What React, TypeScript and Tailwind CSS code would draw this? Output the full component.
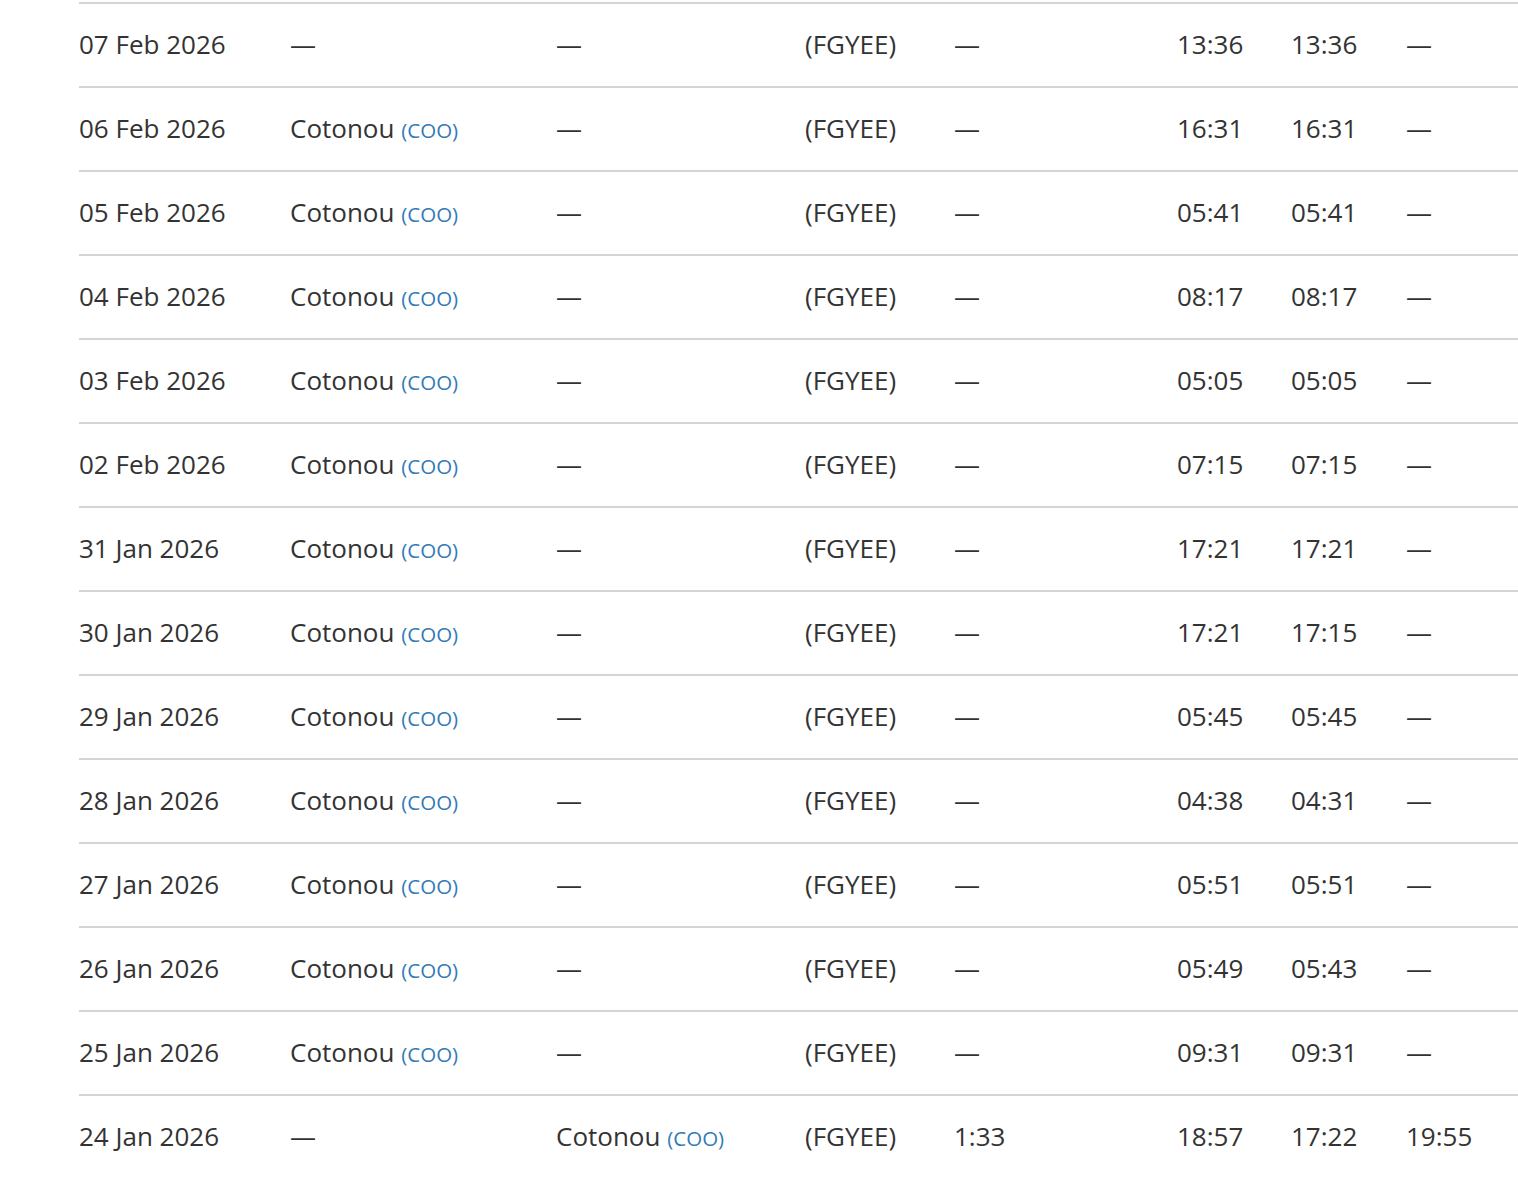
const rows: [string, string | null, string | null, string, string, string, string, string][] = [
  ["07 Feb 2026", null, null, "(FGYEE)", "—", "13:36", "13:36", "—"],
  ["06 Feb 2026", "Cotonou", null, "(FGYEE)", "—", "16:31", "16:31", "—"],
  ["05 Feb 2026", "Cotonou", null, "(FGYEE)", "—", "05:41", "05:41", "—"],
  ["04 Feb 2026", "Cotonou", null, "(FGYEE)", "—", "08:17", "08:17", "—"],
  ["03 Feb 2026", "Cotonou", null, "(FGYEE)", "—", "05:05", "05:05", "—"],
  ["02 Feb 2026", "Cotonou", null, "(FGYEE)", "—", "07:15", "07:15", "—"],
  ["31 Jan 2026", "Cotonou", null, "(FGYEE)", "—", "17:21", "17:21", "—"],
  ["30 Jan 2026", "Cotonou", null, "(FGYEE)", "—", "17:21", "17:15", "—"],
  ["29 Jan 2026", "Cotonou", null, "(FGYEE)", "—", "05:45", "05:45", "—"],
  ["28 Jan 2026", "Cotonou", null, "(FGYEE)", "—", "04:38", "04:31", "—"],
  ["27 Jan 2026", "Cotonou", null, "(FGYEE)", "—", "05:51", "05:51", "—"],
  ["26 Jan 2026", "Cotonou", null, "(FGYEE)", "—", "05:49", "05:43", "—"],
  ["25 Jan 2026", "Cotonou", null, "(FGYEE)", "—", "09:31", "09:31", "—"],
  ["24 Jan 2026", null, "Cotonou", "(FGYEE)", "1:33", "18:57", "17:22", "19:55"],
];

function Airport({ name }: { name: string | null }) {
  if (!name) return <>—</>;
  return (
    <>
      {name}{" "}
      <a href="#" className="text-[20.5px] text-[#337ab7]">
        (COO)
      </a>
    </>
  );
}

export default function App() {
  return (
    <div
      className="w-[1518px] overflow-hidden bg-white pl-[79px] pt-[2px] text-[26px] text-[#333]"
      style={{ fontFamily: '"Open Sans", sans-serif' }}
    >
      <table className="w-full table-fixed border-collapse">
        <colgroup>
          <col className="w-[211px]" />
          <col className="w-[266px]" />
          <col className="w-[249px]" />
          <col className="w-[149px]" />
          <col className="w-[223px]" />
          <col className="w-[114px]" />
          <col className="w-[115px]" />
          <col />
        </colgroup>
        <tbody>
          {rows.map((r) => (
            <tr key={r[0]} className="h-[84px] border-t-2 border-[#d4d4d4]">
              <td className="p-0 pb-[2px] align-middle">{r[0]}</td>
              <td className="p-0 pb-[2px] align-middle">
                <Airport name={r[1]} />
              </td>
              <td className="p-0 pb-[2px] align-middle">
                <Airport name={r[2]} />
              </td>
              <td className="p-0 pb-[2px] align-middle">{r[3]}</td>
              <td className="p-0 pb-[2px] align-middle">{r[4]}</td>
              <td className="p-0 pb-[2px] align-middle">{r[5]}</td>
              <td className="p-0 pb-[2px] align-middle">{r[6]}</td>
              <td className="p-0 pb-[2px] align-middle">{r[7]}</td>
            </tr>
          ))}
        </tbody>
      </table>
    </div>
  );
}
